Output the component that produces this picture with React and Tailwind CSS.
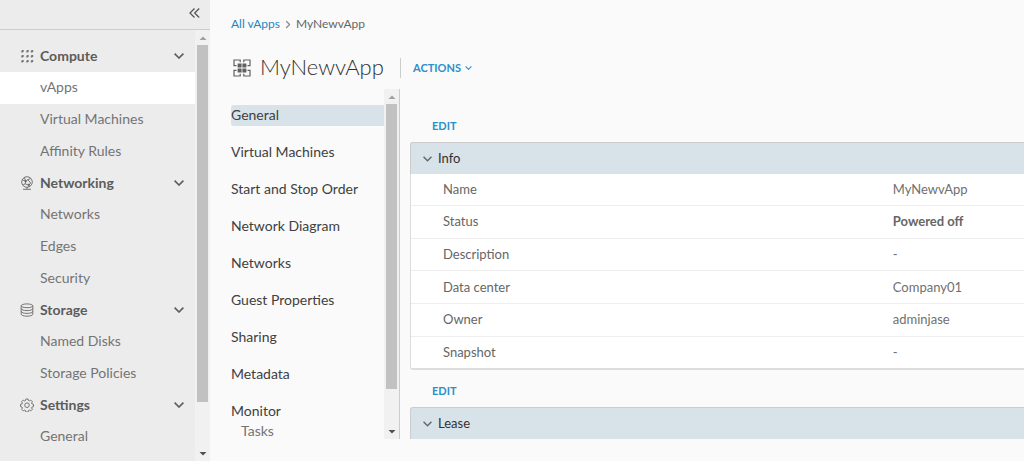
import React from "react";

const GROUPS = [
  { name: "Compute", icon: GridIcon, items: ["vApps", "Virtual Machines", "Affinity Rules"] },
  { name: "Networking", icon: GlobeIcon, items: ["Networks", "Edges", "Security"] },
  { name: "Storage", icon: DiskIcon, items: ["Named Disks", "Storage Policies"] },
  { name: "Settings", icon: GearIcon, items: ["General"] },
];

const MENU = [
  "General",
  "Virtual Machines",
  "Start and Stop Order",
  "Network Diagram",
  "Networks",
  "Guest Properties",
  "Sharing",
  "Metadata",
  "Monitor",
];

const INFO = [
  ["Name", "MyNewvApp"],
  ["Status", "Powered off"],
  ["Description", "-"],
  ["Data center", "Company01"],
  ["Owner", "adminjase"],
  ["Snapshot", "-"],
];

function GridIcon() {
  return (
    <svg className="size-3.5 shrink-0" viewBox="0 0 14 14" fill="#777" aria-hidden="true">
      {[1, 6, 11].map((y) =>
        [1.5, 6.5, 11].map((x) => <path key={`${x}-${y}`} d={`M${x + 0.5} ${y}h1.7v1.300l-.9 1.100h-1.500v-1.400z`} />)
      )}
    </svg>
  );
}

function GlobeIcon() {
  return (
    <svg className="size-3.5 shrink-0" viewBox="0 0 14 14" fill="none" stroke="#666" strokeWidth="0.9" aria-hidden="true">
      <circle cx="7" cy="6" r="5.300" />
      <path d="M2.300 3.800l3.400 1.400 2.200-1.600 3-1.200M5.700 5.200l-.5 2.600 3.600 1.400 1.800-2.200-2.700-3.400M5.200 7.800l-2.400 1.400M8.800 9.200l.3 1.600M5.700 5.200L4.400 1.500" />
      <path d="M3 13.300h8M7 11.300v2" />
      <circle cx="5.600" cy="5.200" r="0.700" fill="#666" />
      <circle cx="8.800" cy="8.900" r="0.700" fill="#666" />
    </svg>
  );
}

function DiskIcon() {
  return (
    <svg className="size-3.5 shrink-0" viewBox="0 0 14 14" fill="none" stroke="#6a6a6a" strokeWidth="0.9" aria-hidden="true">
      <ellipse cx="7" cy="2.800" rx="5.800" ry="1.900" />
      <path d="M1.200 2.800v8.400c0 1.100 2.600 2 5.800 2s5.800-.9 5.800-2V2.800M1.200 5.600c0 1.100 2.600 2 5.800 2s5.800-.9 5.800-2M1.200 8.400c0 1.100 2.600 2 5.800 2s5.800-.9 5.800-2" />
    </svg>
  );
}

function GearIcon() {
  return (
    <svg className="size-3.5 shrink-0" viewBox="0 0 14 14" fill="none" stroke="#6a6a6a" strokeWidth="0.9" strokeLinejoin="round" aria-hidden="true">
      <path d="M5.900 1h2.200l.4 1.500 1 .4 1.300-.8 1.600 1.600-.8 1.300.4 1 1.500.4v2.200l-1.500.4-.4 1 .8 1.300-1.600 1.600-1.300-.8-1 .4-.4 1.500H5.900l-.4-1.500-1-.4-1.300.8-1.600-1.600.8-1.300-.4-1L.5 8.600V6.400l1.500-.4.4-1-.8-1.300 1.600-1.600 1.300.8 1-.4z" />
      <circle cx="7" cy="7.200" r="2.300" />
    </svg>
  );
}

function VAppIcon() {
  return (
    <svg className="size-[18px] shrink-0" viewBox="0 0 18 18" fill="none" stroke="#606060" strokeWidth="1.200" aria-hidden="true">
      <path d="M3.500 6.600H1V1h6.200v2.200M10.800 3.200V1H17v5.600h-2.500M14.500 11.400H17V17h-6.200v-2.200M7.200 14.800V17H1v-5.600h2.500" />
      <path d="M4.600 4.600h4v4h-4zM9.400 4.600h4v4h-4zM4.600 9.400h4v4h-4zM9.400 9.400h4v4h-4z" fill="#606060" stroke="none" />
    </svg>
  );
}

function Chevron({ className }) {
  return (
    <svg className={className} viewBox="0 0 10 6" fill="none" stroke="currentColor" strokeWidth="1.600" aria-hidden="true">
      <path d="M.6.6L5 5 9.400.6" />
    </svg>
  );
}

function Scrollbar({ thumb }) {
  return (
    <div className="flex w-[15px] shrink-0 flex-col items-center bg-[#f1f1f1]" aria-hidden="true">
      <div className="flex h-[15px] items-center">
        <svg className="h-1 w-2" viewBox="0 0 8 4"><path d="M.5 4L4 .5 7.500 4z" fill="#a0a0a0" /></svg>
      </div>
      <div className="flex w-[11px] grow flex-col">
        <div className={`bg-[#c1c1c1] ${thumb}`} />
      </div>
      <div className="flex h-[15px] items-center">
        <svg className="h-1 w-2" viewBox="0 0 8 4"><path d="M.5 0L4 3.500 7.500 0z" fill="#505050" /></svg>
      </div>
    </div>
  );
}

function Sidebar() {
  return (
    <aside className="flex w-[210px] shrink-0 flex-col bg-[#ececec]">
      <div className="flex h-[30px] shrink-0 items-center justify-end border-b border-[#cccccc] pr-2.5 pb-1">
        <button aria-label="Collapse navigation" className="text-[#565656]">
          <svg className="h-2.5 w-[11px]" viewBox="0 0 11 10" fill="none" stroke="currentColor" strokeWidth="1.300">
            <path d="M5.500.5L1 5l4.500 4.500M10.200.5L5.700 5l4.500 4.500" />
          </svg>
        </button>
      </div>
      <div className="flex min-h-0 grow">
        <nav className="min-w-0 grow overflow-hidden pt-[11px]">
          {GROUPS.map(({ name, icon: Icon, items }) => (
            <section key={name}>
              <button className="flex h-[31px] w-full items-center pr-[11px] pb-0.5 pl-5 text-left text-sm font-bold text-[#5c5c5c]">
                <Icon />
                <span className="ml-1.5 grow">{name}</span>
                <Chevron className="h-1.5 w-2.5" />
              </button>
              {items.map((item) => (
                <a
                  key={item}
                  href="#"
                  className={`flex h-8 items-center pb-0.5 pl-10 text-sm text-[#747474] ${item === "vApps" ? "bg-white" : ""}`}
                >
                  {item}
                </a>
              ))}
            </section>
          ))}
        </nav>
        <Scrollbar thumb="h-[89%]" />
      </div>
    </aside>
  );
}

function PanelHeader({ title }) {
  return (
    <h2>
      <button className="flex h-8 w-full items-center gap-1.5 rounded-tl-[3px] border-t border-l border-[#cccccc] bg-[#d8e3e9] pl-3 text-left text-[13px] text-[#313131]">
        <Chevron className="h-1.5 w-[9px] text-[#666666]" />
        {title}
      </button>
    </h2>
  );
}

function EditButton() {
  return <button className="block h-4 px-[22px] text-left text-[11px] leading-4 font-bold text-[#2b8fca]">EDIT</button>;
}

export default function App() {
  return (
    <div className="flex h-screen overflow-hidden bg-[#fafafa] font-[Lato,sans-serif] text-[#666666]">
      <Sidebar />
      <main className="flex min-w-0 grow flex-col pb-[22px] pl-[21px]">
        <nav aria-label="Breadcrumb" className="mt-4 flex h-4 shrink-0 items-center text-xs">
          <a href="#" className="text-[#1a86c4]">All vApps</a>
          <Chevron className="mx-1 h-[5px] w-2 -rotate-90 text-[#8c8c8c]" />
          <span>MyNewvApp</span>
        </nav>
        <header className="mt-5 flex h-8 shrink-0 items-center pl-0.5">
          <VAppIcon />
          <h1 className="ml-[9px] w-[140px] pb-0.5 text-[22px] leading-[30px] font-light text-[#313131]">MyNewvApp</h1>
          <button className="flex h-5 items-center gap-1 border-l border-[#cccccc] pl-3 text-[11px] font-bold text-[#2b8fca]">
            ACTIONS
            <Chevron className="h-1 w-[7px]" />
          </button>
        </header>
        <div className="mt-[5px] flex min-h-0 grow">
          <div className="flex w-[169px] shrink-0 border-r border-[#cccccc]">
            <nav className="flex min-w-0 grow flex-col gap-4 overflow-hidden pt-4 text-sm text-[#404040]">
              {MENU.map((item) => (
                <div key={item} className="shrink-0">
                  <a href="#" className={`block pb-0.5 leading-[19px] ${item === "General" ? "rounded-l-[3px] bg-[#d8e3e9]" : ""}`}>
                    {item}
                  </a>
                  {item === "Monitor" && (
                    <a href="#" className="block pl-2.5 leading-[17px] text-[#747474]">Tasks</a>
                  )}
                </div>
              ))}
            </nav>
            <Scrollbar thumb="h-[89%]" />
          </div>
          <div className="min-w-0 grow overflow-hidden pt-[29px] pl-2.5">
            <EditButton />
            <section className="mt-2">
              <PanelHeader title="Info" />
              <div className="overflow-hidden rounded-bl-[3px] border-b-2 border-l border-[#dddddd] bg-white">
                <table className="h-[194px] w-full table-fixed text-left text-[13px]">
                  <tbody>
                    {INFO.map(([label, value]) => (
                      <tr key={label} className="border-b border-[#eeeeee] last:border-b-0">
                        <th scope="row" className="w-[78.6%] pl-8 font-normal">{label}</th>
                        <td className={value === "Powered off" ? "font-bold" : "text-[#707070]"}>{value}</td>
                      </tr>
                    ))}
                  </tbody>
                </table>
              </div>
            </section>
            <div className="mt-[13px]">
              <EditButton />
            </div>
            <section className="mt-2">
              <PanelHeader title="Lease" />
            </section>
          </div>
        </div>
      </main>
    </div>
  );
}
